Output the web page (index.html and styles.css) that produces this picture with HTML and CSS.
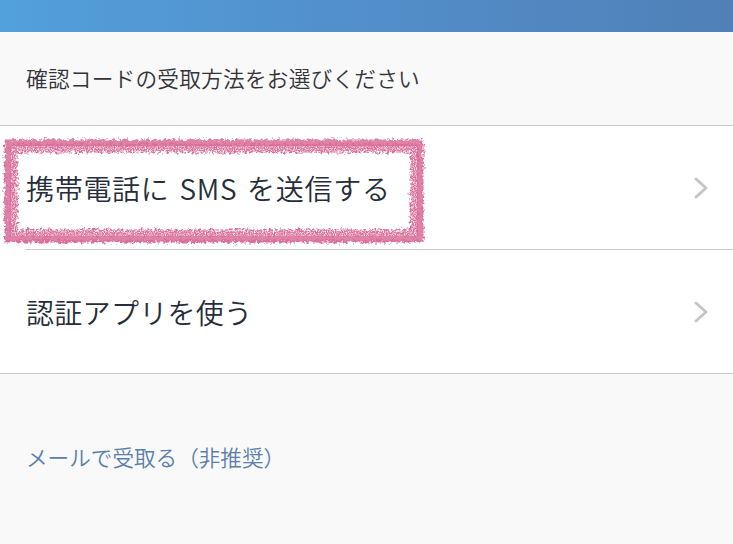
FILE: index.html
```html
<!DOCTYPE html>
<html lang="ja">
<head>
<meta charset="utf-8">
<link rel="stylesheet" href="styles.css">
</head>
<body>
<div class="topbar"></div>
<div class="subtitle">確認コードの受取方法をお選びください</div>
<div class="list">
  <div class="item item-first">
    <span class="label label-sms">携帯電話に SMS を送信する</span>
    <svg class="chev" width="16" height="24" viewBox="0 0 16 24"><path d="M3 3 L13 12 L3 21" fill="none" stroke="#c5c5c9" stroke-width="3" stroke-linecap="round" stroke-linejoin="round"/></svg>
    <svg class="scribble" width="428" height="110" viewBox="0 0 428 110">
      <defs>
        <filter id="rough" x="-5%" y="-10%" width="110%" height="120%">
          <feTurbulence type="fractalNoise" baseFrequency="0.35" numOctaves="3" seed="4" result="n"/>
          <feDisplacementMap in="SourceGraphic" in2="n" scale="8" xChannelSelector="R" yChannelSelector="G"/>
        </filter>
        <filter id="speck" x="0" y="0" width="100%" height="100%">
          <feTurbulence type="fractalNoise" baseFrequency="0.9" numOctaves="2" seed="9" result="t"/>
          <feColorMatrix in="t" type="matrix" values="0 0 0 0 1  0 0 0 0 1  0 0 0 0 1  0 0 0 -2.2 1.35" result="w"/>
          <feComposite in="w" in2="SourceGraphic" operator="in"/>
        </filter>
      </defs>
      <g filter="url(#rough)">
        <rect x="10" y="10" width="406" height="90" fill="none" stroke="#d9719c" stroke-width="13"/>
        <rect x="7" y="6" width="412" height="96" fill="none" stroke="#e08aae" stroke-width="4" opacity="0.7"/>
      </g>
      <g filter="url(#speck)">
        <rect x="10" y="10" width="406" height="90" fill="none" stroke="#000" stroke-width="12"/>
      </g>
    </svg>
  </div>
  <div class="item">
    <span class="label">認証アプリを使う</span>
    <svg class="chev" width="16" height="24" viewBox="0 0 16 24"><path d="M3 3 L13 12 L3 21" fill="none" stroke="#c5c5c9" stroke-width="3" stroke-linecap="round" stroke-linejoin="round"/></svg>
  </div>
</div>
<div class="mail-link">メールで受取る（非推奨）</div>
</body>
</html>
```
FILE: styles.css
```css
html, body {
  margin: 0;
  padding: 0;
}
body {
  background: #f9f9fa;
  font-family: "Noto Sans CJK JP", "Noto Sans", sans-serif;
  width: 733px;
  height: 544px;
  overflow: hidden;
}
.topbar {
  height: 32px;
  background: linear-gradient(90deg, #52a0dc 0%, #5290cc 45%, #5080b7 100%);
}
.subtitle {
  height: 91px;
  padding-bottom: 2px;
  display: flex;
  align-items: center;
  padding-left: 26px;
  font-size: 21.7px;
  font-weight: 350;
  color: #333338;
  letter-spacing: 0.2px;
}
.list {
  background: #ffffff;
  border-top: 1px solid #c9c9cc;
  border-bottom: 1px solid #c9c9cc;
}
.item {
  position: relative;
  margin-left: 25px;
  padding-left: 1px;
  padding-right: 24px;
  height: 123px;
  display: flex;
  align-items: center;
  justify-content: space-between;
}
.item-first {
  border-bottom: 1px solid #c9c9cc;
}
.label {
  font-size: 28px;
  font-weight: 350;
  color: #252d3a;
  letter-spacing: 0.3px;
  position: relative;
  z-index: 1;
}
.label-sms {
  word-spacing: 3px;
  letter-spacing: 0.7px;
}
.chev {
  display: block;
}
.scribble {
  position: absolute;
  left: -24px;
  top: 10px;
}
.mail-link {
  margin-top: 70px;
  padding-left: 26px;
  line-height: 26px;
  font-size: 21.6px;
  font-weight: 350;
  color: #5b7fab;
}
```
